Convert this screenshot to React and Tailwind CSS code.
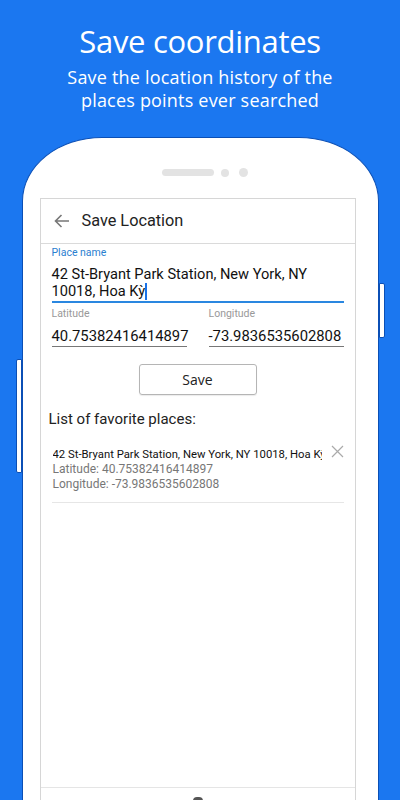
import React from "react";

export default function App() {
  return (
    <div className="w-[400px] h-[800px] bg-[#1b77f0] overflow-hidden flex flex-col items-center" style={{ fontFamily: "'Open Sans', sans-serif" }}>
      <h1 className="mt-[19px] text-white text-[31px] leading-[44px] tracking-[-0.3px]">Save coordinates</h1>
      <p className="mt-[3px] text-white text-[18px] leading-[23px] text-center tracking-[0.2px]">
        Save the location history of the
        <br />
        places points ever searched
      </p>
      <div className="relative mt-[25px] w-[357px] flex-1 bg-white rounded-t-[80px_64px] border border-[#0b4fb5] border-b-0 flex flex-col">
        <div className="absolute -right-[7px] top-[145px] w-[6px] h-[55px] bg-white border border-[#0b4fb5] rounded-r-[2px]"></div>
        <div className="absolute -left-[7px] top-[221px] w-[6px] h-[114px] bg-white border border-[#0b4fb5] rounded-l-[2px]"></div>
        <div className="mt-[30px] flex items-center justify-center gap-[7px] ml-[10px]">
          <div className="w-[52px] h-[7px] rounded-full bg-[#e3e3e3]"></div>
          <div className="w-[8px] h-[8px] rounded-full bg-[#e3e3e3]"></div>
          <div className="w-[9px] h-[9px] rounded-full bg-[#e3e3e3] ml-[3px]"></div>
        </div>
        <div className="mt-[21px] ml-[17px] w-[316px] flex-1 border border-[#d6d6d6] border-b-0 flex flex-col" style={{ fontFamily: "Roboto, sans-serif" }}>
          <div className="h-[45px] shrink-0 border-b border-[#dadada] flex items-center pl-[13px]">
            <svg width="16" height="14" viewBox="0 0 16 14" fill="none" stroke="#777" strokeWidth="1.6">
              <path d="M15 7H1.5M7.5 1L1.5 7l6 6" />
            </svg>
            <span className="ml-[12px] text-[16.3px] text-[#222]">Save Location</span>
          </div>
          <div className="px-[11px] pt-[2px]">
            <div className="text-[10.5px] text-[#2a80d0] leading-[14px]">Place name</div>
            <div className="mt-[6px] text-[14.6px] leading-[17px] text-[#111] pb-[1px] border-b-2 border-[#2a87e0]">
              42 St-Bryant Park Station, New York, NY
              <br />
              10018, Hoa Kỳ<span className="inline-block w-[1.5px] h-[17px] bg-[#1a73e8] align-top"></span>
            </div>
            <div className="mt-[4px] grid grid-cols-2 gap-[22px]">
              <div>
                <div className="text-[10.5px] text-[#999] leading-[14px]">Latitude</div>
                <div className="mt-[7px] text-[14.8px] leading-[17px] text-[#111] pb-[1px] border-b border-[#777]">40.75382416414897</div>
              </div>
              <div>
                <div className="text-[10.5px] text-[#999] leading-[14px]">Longitude</div>
                <div className="mt-[7px] text-[14.8px] leading-[17px] text-[#111] pb-[1px] border-b border-[#777] whitespace-nowrap">-73.9836535602808</div>
              </div>
            </div>
            <div className="mt-[17px] flex justify-center">
              <div className="w-[118px] h-[31px] border border-[#b5b5b5] rounded-[3px] flex items-center justify-center text-[14px] text-[#222] shadow-[0_1px_1px_rgba(0,0,0,0.08)]" style={{ fontFamily: "'Open Sans', sans-serif" }}>Save</div>
            </div>
          </div>
          <div className="px-[8px] mt-[14px] text-[15px] leading-[20px] text-[#222]">List of favorite places:</div>
          <div className="mx-[11px] mt-[18px] flex items-start border-b border-[#e6e6e6] pb-[10px]">
            <div className="flex-1 min-w-0 pl-[1px]">
              <div className="text-[11.3px] leading-[15px] text-[#111] whitespace-nowrap overflow-hidden">42 St-Bryant Park Station, New York, NY 10018, Hoa Kỳ</div>
              <div className="text-[12px] leading-[15px] text-[#777]">Latitude: 40.75382416414897</div>
              <div className="text-[12px] leading-[15px] text-[#777]">Longitude: -73.9836535602808</div>
            </div>
            <svg className="ml-[9px] -mt-[2px]" width="13" height="13" viewBox="0 0 13 13" stroke="#aaa" strokeWidth="1.2">
              <path d="M1 1l11 11M12 1L1 12" />
            </svg>
          </div>
          <div className="flex-1"></div>
          <div className="h-[13px] border-t border-[#e5e5e5] flex justify-center">
            <div className="mt-[9px] w-[10px] h-[4px] rounded-t-full bg-[#555]"></div>
          </div>
        </div>
      </div>
    </div>
  );
}
